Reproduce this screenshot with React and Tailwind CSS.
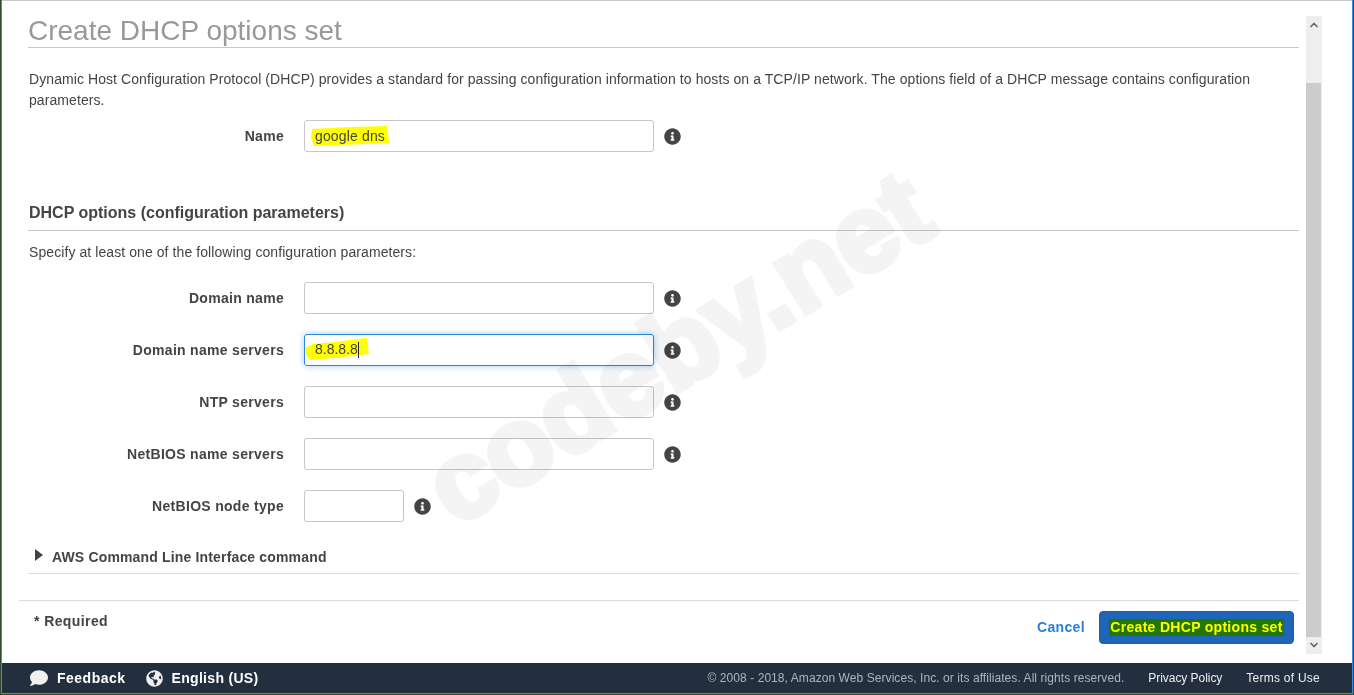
import React from "react";
import { FaInfoCircle, FaComment, FaGlobeAmericas } from "react-icons/fa";
import { LuChevronUp, LuChevronDown } from "react-icons/lu";

const fields = [
  { label: "Domain name" },
  { label: "Domain name servers", value: "8.8.8.8", focused: true },
  { label: "NTP servers" },
  { label: "NetBIOS name servers" },
  { label: "NetBIOS node type", small: true },
];

// Highlighter stroke that somebody drew over the screenshot
function Marker({ className, points, viewBox }) {
  return (
    <svg className={className} viewBox={viewBox} preserveAspectRatio="none">
      <polygon points={points} fill="#ffff00" />
    </svg>
  );
}

function Row({ label, children, small, focused }) {
  return (
    <div className="flex items-center h-8 mb-5">
      <div className="w-[255px] text-right font-bold text-[14px] text-[#444] tracking-[0.3px]">{label}</div>
      <div
        className={`relative ml-5 h-8 rounded-[3px] border ${small ? "w-[100px]" : "w-[350px]"} ${
          focused ? "border-[#2b87de] shadow-[0_0_6px_rgba(43,135,222,0.45)]" : "border-[#c6c6c6]"
        }`}
      >
        {children}
      </div>
      <FaInfoCircle className="ml-[10px] text-[#444] text-[17px]" />
    </div>
  );
}

export default function App() {
  return (
    <div className="relative w-[1354px] h-[695px] overflow-hidden bg-[#2f4a2e] pl-px pr-px pb-px font-['Liberation_Sans',Arial,sans-serif]">
      <div className="flex flex-col h-full border-x border-b border-[#3a8fdc]">
        <div className="flex flex-1 min-h-0 bg-white border-t border-[#c8c8c8]">
          <div className="w-[1304px] pl-[17px] pr-[7px] shrink-0">
            {/* page title */}
            <div className="ml-[9px] h-[47px] pt-[12px] border-b border-[#c8c8c8]">
              <h1 className="text-[28px] leading-[36px] text-[#999]">Create DHCP options set</h1>
            </div>

            <p className="ml-[10px] mt-[21px] text-[14px] leading-[21px] text-[#444] tracking-[0.08px] w-[1250px]">
              Dynamic Host Configuration Protocol (DHCP) provides a standard for passing configuration information to hosts on a TCP/IP network. The options field of a DHCP message contains configuration parameters.
            </p>

            <div className="ml-[10px] mt-[9px]">
              <Row label="Name">
                <Marker className="absolute left-[6px] top-[5px] w-[78px] h-[21px]" viewBox="0 0 78 21" points="1,3 40,1 76,0 78,17 30,19 3,20 0,12" />
                <span className="absolute left-[10px] top-[5px] text-[14px] leading-[21px] text-[#444] tracking-[0.15px]">google dns</span>
              </Row>
            </div>

            <div className="ml-[9px] mt-[51px] h-[28px] border-b border-[#c8c8c8]">
              <h2 className="ml-px text-[16px] leading-[20px] font-bold text-[#444]">DHCP options (configuration parameters)</h2>
            </div>
            <p className="ml-[10px] mt-[11px] text-[14px] leading-[20px] text-[#444] tracking-[0.08px]">Specify at least one of the following configuration parameters:</p>

            <div className="ml-[10px] mt-[20px]">
              {fields.map((f) => (
                <Row key={f.label} label={f.label} small={f.small} focused={f.focused}>
                  {f.value && (
                    <>
                      <Marker className="absolute left-0 top-[3px] w-[64px] h-[22px]" viewBox="0 0 64 22" points="0,10 8,6 30,4 62,0 64,16 30,20 5,22 1,16" />
                      <span className="absolute left-[10px] top-[4px] text-[14px] leading-[21px] text-[#444]">{f.value}</span>
                      <span className="absolute left-[53px] top-[7px] w-px h-4 bg-[#222]" />
                    </>
                  )}
                </Row>
              ))}
            </div>

            <div className="ml-[9px] mt-[13px] h-[32px] flex items-start border-b border-[#dcdcdc]">
              <svg className="w-2 h-3 ml-[7px] mt-[7px]" viewBox="0 0 8 12">
                <polygon points="0,0 8,6 0,12" fill="#444" />
              </svg>
              <span className="ml-[9px] mt-[5px] text-[14px] leading-[20px] font-bold text-[#444] tracking-[0.16px]">AWS Command Line Interface command</span>
            </div>

            {/* form actions */}
            <div className="mt-[26px] border-t border-[#dcdcdc] flex justify-between items-start">
              <span className="ml-[15px] mt-[10px] text-[14px] leading-[20px] font-bold text-[#444] tracking-[0.4px]">* Required</span>
              <div className="flex items-center mt-[10px] mr-[5px]">
                <span className="text-[14px] font-bold text-[#2b80d6] tracking-[0.35px]">Cancel</span>
                <button className="ml-[14px] w-[195px] h-[33px] rounded-[4px] border border-[#1a5fa8] bg-[#1f66b8] flex items-center justify-center">
                  <span className="bg-[#227700] px-px text-[14px] leading-[17px] font-bold text-[#ffff00] tracking-[0.3px]">Create DHCP options set</span>
                </button>
              </div>
            </div>
          </div>

          {/* scrollbar */}
          <div className="mt-[15px] mb-[9px] w-4 flex flex-col bg-[#eeeeee] text-[#666]">
            <LuChevronUp className="w-3 h-4 mt-px mx-auto" strokeWidth={3.5} />
            <div className="mt-[50px] h-[554px] w-[15px] bg-[#cccccc]" />
            <LuChevronDown className="w-3 h-4 mx-auto" strokeWidth={3.5} />
          </div>
        </div>

        {/* footer */}
        <div className="h-[30px] shrink-0 bg-[#232f3e] flex items-center text-white">
          <FaComment className="ml-[28px] text-[18px] text-[#f0f0f0]" />
          <span className="ml-[9px] text-[14px] font-bold tracking-[0.5px]">Feedback</span>
          <FaGlobeAmericas className="ml-5 text-[17px] text-[#f0f0f0]" />
          <span className="ml-[9px] text-[14px] font-bold tracking-[0.3px]">English (US)</span>
          <span className="ml-auto text-[12px] text-[#aab7b8] tracking-[0.07px]">© 2008 - 2018, Amazon Web Services, Inc. or its affiliates. All rights reserved.</span>
          <span className="ml-6 text-[12px] text-[#eeeeee] tracking-[-0.05px]">Privacy Policy</span>
          <span className="ml-6 mr-[32px] text-[12px] text-[#eeeeee] tracking-[0.25px]">Terms of Use</span>
        </div>
      </div>

      {/* watermark */}
      <div className="absolute left-[394px] top-[293px] text-[109px] leading-none font-bold text-[#f4f4f4] [-webkit-text-stroke:6px_#f4f4f4] mix-blend-multiply -rotate-[31.5deg] pointer-events-none whitespace-nowrap">
        codeby.net
      </div>
    </div>
  );
}
